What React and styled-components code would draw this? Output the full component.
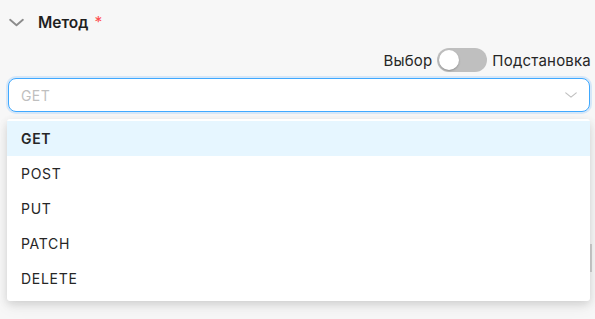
import React from 'react'
import styled, { createGlobalStyle } from 'styled-components'

const Global = createGlobalStyle`
  body {
    margin: 0;
    background: #f7f7f7;
    font-family: Inter, "Noto Sans", sans-serif;
  }
`

const Page = styled.div`
  position: relative;
  width: 595px;
  height: 319px;
  overflow: hidden;
`

const Header = styled.div`
  display: flex;
  align-items: center;
  height: 44px;
  padding-left: 8px;
  gap: 13px;
`

const Title = styled.span`
  font-size: 15.5px;
  font-weight: 600;
  color: #1f1f1f;
`

const Star = styled.span`
  color: #ff4d4f;
  margin-left: 6px;
  font-weight: 400;
`

const ToggleRow = styled.div`
  display: flex;
  justify-content: flex-end;
  align-items: center;
  gap: 5px;
  height: 32px;
  padding-right: 4px;
  font-size: 15px;
  letter-spacing: 0.2px;
  color: #262626;
`

const Switch = styled.div`
  width: 50px;
  height: 24px;
  border-radius: 12px;
  background: #bfbfbf;
  display: flex;
  align-items: center;
  padding: 2px;
  box-sizing: border-box;
`

const Knob = styled.div`
  width: 20px;
  height: 20px;
  border-radius: 50%;
  background: #fff;
  box-shadow: 0 1px 2px rgba(0, 0, 0, 0.25);
`

const Select = styled.div`
  margin: 2px 5px 0 8px;
  height: 34px;
  box-sizing: border-box;
  border: 1px solid #40a9ff;
  border-radius: 8px;
  box-shadow: 0 0 0 2px rgba(24, 144, 255, 0.15);
  background: #fff;
  display: flex;
  align-items: center;
  justify-content: space-between;
  padding: 0 11px 0 12px;
  font-size: 14px;
  letter-spacing: 0.4px;
  color: #bfbfbf;
`

const Behind = styled.div`
  margin: 132px 3px 0 auto;
  width: 40px;
  height: 28px;
  border-right: 2px solid #cfcfcf;
`

const Menu = styled.div`
  position: absolute;
  top: 119px;
  left: 7px;
  width: 583px;
  padding: 2px 0 5px;
  background: #fff;
  border-radius: 3px;
  box-shadow: 0 3px 8px rgba(0, 0, 0, 0.12), 0 6px 16px rgba(0, 0, 0, 0.06);
`

const Option = styled.div`
  height: 35px;
  display: flex;
  align-items: center;
  padding-left: 14px;
  font-size: 14px;
  letter-spacing: 0.7px;
  color: #262626;
  background: ${p => (p.active ? '#e6f6ff' : '#fff')};
  font-weight: ${p => (p.active ? 600 : 400)};
`

const Chevron = ({ size = 16, color = '#8c8c8c', width = 1.6 }) => (
  <svg width={size} height={size} viewBox="0 0 16 16" fill="none">
    <path d="M2 5.5l6 5 6-5" stroke={color} strokeWidth={width} strokeLinecap="round" strokeLinejoin="round" />
  </svg>
)

const methods = ['GET', 'POST', 'PUT', 'PATCH', 'DELETE']

export default function App() {
  return (
    <Page>
      <Global />
      <Header>
        <Chevron size={17} color="#8c8c8c" width={1.8} />
        <Title>
          Метод<Star>*</Star>
        </Title>
      </Header>
      <ToggleRow>
        <span>Выбор</span>
        <Switch>
          <Knob />
        </Switch>
        <span>Подстановка</span>
      </ToggleRow>
      <Select>
        <span>GET</span>
        <Chevron size={14} color="#bfbfbf" width={1.3} />
      </Select>
      <Behind />
      <Menu>
        {methods.map((m, i) => (
          <Option key={m} active={i === 0}>
            {m}
          </Option>
        ))}
      </Menu>
    </Page>
  )
}
